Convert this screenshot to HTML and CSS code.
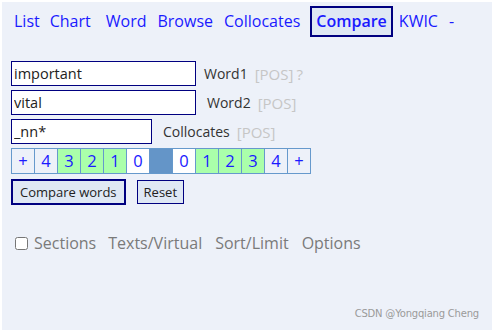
FILE: index.html
```html
<!DOCTYPE html>
<html lang="en">
<head>
    <meta charset="UTF-8">
    <title>Compare</title>
    <link rel="stylesheet" href="styles.css">
</head>
<body>
    <div class="panel">
        <!-- Menu -->
        <div class="menu">
            <a class="menu__link menu__link--list">List</a>
            <a class="menu__link menu__link--chart">Chart</a>
            <a class="menu__link menu__link--word">Word</a>
            <a class="menu__link menu__link--browse">Browse</a>
            <a class="menu__link menu__link--coll">Collocates</a>
            <a class="menu__link menu__link--active">Compare</a>
            <a class="menu__link menu__link--kwic">KWIC</a>
            <a class="menu__link menu__link--dash">-</a>
        </div>

        <!-- Words -->
        <div class="form">
            <div class="form__row">
                <input class="form__input form__input--wide" type="text" value="important">
                <span class="form__label form__label--w1">Word1</span>
                <span class="form__pos">[POS]</span>
                <span class="form__pos form__pos--q">?</span>
            </div>
            <div class="form__row">
                <input class="form__input form__input--wide" type="text" value="vital">
                <span class="form__label form__label--w2">Word2</span>
                <span class="form__pos">[POS]</span>
            </div>
            <div class="form__row">
                <input class="form__input form__input--short" type="text" value="_nn*">
                <span class="form__label form__label--coll">Collocates</span>
                <span class="form__pos">[POS]</span>
            </div>

            <!-- Span -->
            <table class="span">
                <tr>
                    <td>+</td>
                    <td class="span__soft">4</td>
                    <td class="span__on">3</td>
                    <td class="span__on">2</td>
                    <td class="span__on">1</td>
                    <td class="span__off">0</td>
                    <td class="span__node"></td>
                    <td class="span__off">0</td>
                    <td class="span__on">1</td>
                    <td class="span__on">2</td>
                    <td class="span__on">3</td>
                    <td class="span__soft">4</td>
                    <td>+</td>
                </tr>
            </table>

            <div class="form__buttons">
                <button class="btn btn--main">Compare words</button>
                <button class="btn">Reset</button>
            </div>
        </div>

        <!-- Options -->
        <div class="options">
            <input class="options__check" type="checkbox">
            <span class="options__item options__item--sections">Sections</span>
            <span class="options__item">Texts/Virtual</span>
            <span class="options__item">Sort/Limit</span>
            <span class="options__item">Options</span>
        </div>

        <div class="credit">CSDN @Yongqiang Cheng</div>
    </div>
</body>
</html>
```

FILE: styles.css
```css
body {
    margin: 0;
    background: #ffffff;
    font-family: 'Open Sans', sans-serif;
}

.panel {
    margin: 2px 2px 0;
    height: 328px;
    background: #edf1f9;
    padding: 4px 0 0 0;
    box-sizing: border-box;
    display: flex;
    flex-direction: column;
}

.menu {
    display: flex;
    align-items: center;
    height: 30px;
    padding-left: 12px;
    font-size: 16px;
}

.menu__link {
    color: #1a1aff;
    margin-right: 10px;
}

.menu__link--chart { margin-right: 15px; }
.menu__link--word { margin-right: 11px; }
.menu__link--browse { margin-right: 11px; }
.menu__link--coll { margin-right: 10px; }

.menu__link--active {
    font-weight: 600;
    border: 2px solid #000080;
    background: #dfe8f4;
    padding: 3px 4px 4px;
    margin-right: 6px;
    line-height: 20px;
}

.menu__link--kwic { margin-right: 11px; }

.form {
    padding: 25px 0 0 9px;
}

.form__row {
    display: flex;
    align-items: center;
    height: 25px;
    margin-bottom: 4px;
    font-size: 14px;
}

.form__input {
    box-sizing: border-box;
    height: 25px;
    border: 1px solid #000080;
    background: #ffffff;
    font: 14.5px 'Open Sans', sans-serif;
    color: #222;
    padding: 0 2px;
    margin: 0;
}

.form__input--wide { width: 185px; }
.form__input--short { width: 141px; }

.form__label {
    color: #333;
    margin-right: 7px;
}

.form__label--w1 { margin-left: 8px; }
.form__label--w2 { margin-left: 11px; }
.form__label--coll { margin-left: 11px; }

.form__pos {
    color: #c6c6c6;
    font-size: 15px;
}

.form__pos--q {
    margin-left: 3px;
}

.span {
    border-collapse: collapse;
    font-size: 16.5px;
}

.span td {
    border: 1px solid #6699cc;
    width: 22px;
    height: 24px;
    padding: 0;
    text-align: center;
    color: #1a1aff;
    line-height: 22px;
}

.span__on { background: #aaffaa; }
.span__off { background: #ffffff; }
.span__node { background: #6495c8; }

.form__buttons {
    display: flex;
    align-items: center;
    margin-top: 5px;
    gap: 11px;
}

.btn {
    font: 13px 'Open Sans', sans-serif;
    color: #222;
    background: #dfe8f4;
    border: 1px solid #000080;
    height: 24px;
    padding: 0 6px;
}

.btn--main {
    border-width: 2px;
    height: 26px;
    padding: 0 7px;
}

.options {
    display: flex;
    align-items: center;
    margin-top: 27px;
    padding-left: 13px;
    font-size: 16px;
    color: #7a7a7a;
}

.options__check {
    width: 13px;
    height: 13px;
    margin: 0 6px 0 0;
}

.options__item {
    margin-right: 13px;
}

.options__item--sections {
    margin-right: 12px;
}

.credit {
    margin-top: auto;
    margin-bottom: 11px;
    text-align: right;
    padding-right: 13px;
    font-size: 10px;
    letter-spacing: -0.2px;
    color: #9a9a9a;
    font-family: 'DejaVu Sans', sans-serif;
}
```
